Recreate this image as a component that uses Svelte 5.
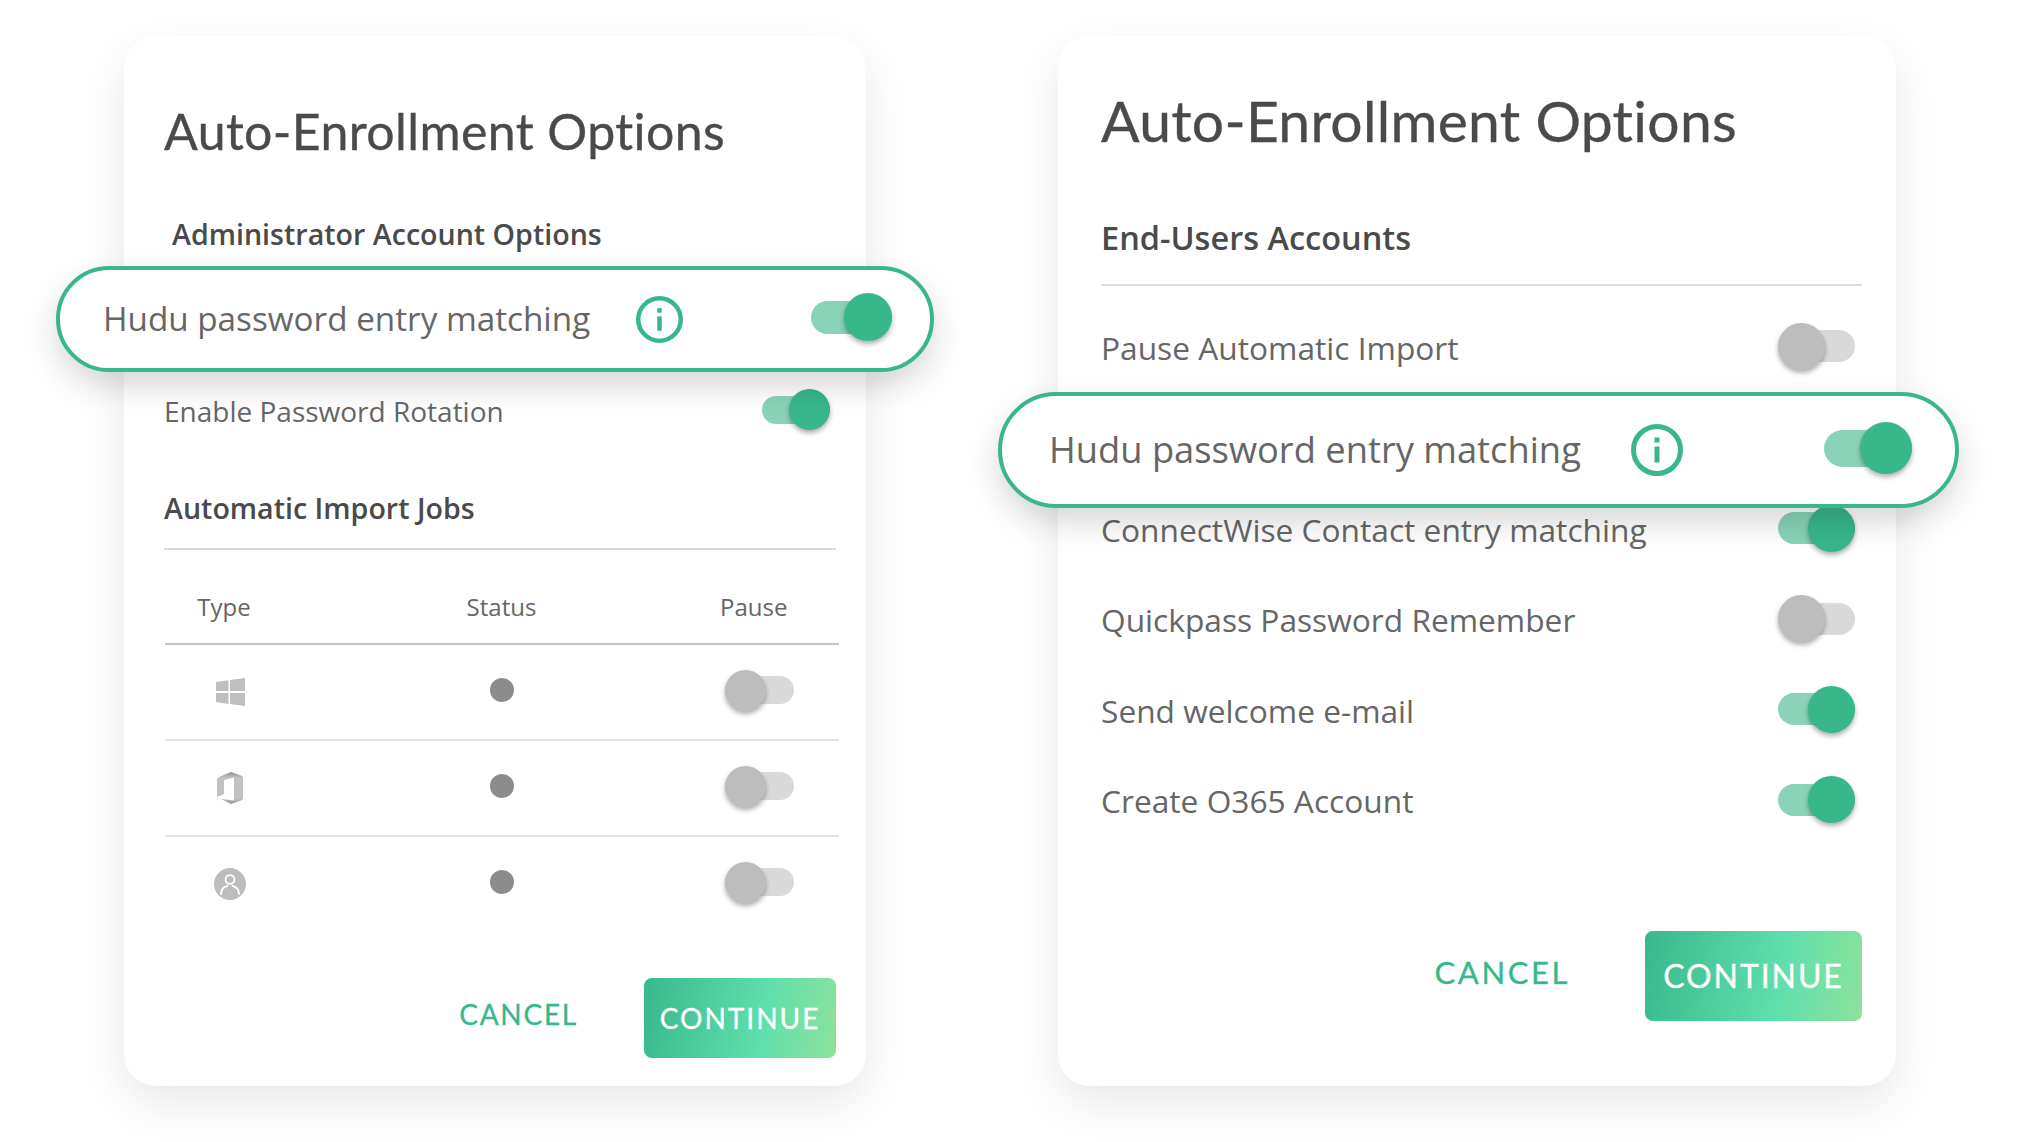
<script>
  const rightRows = [
    { label: 'ConnectWise Contact entry matching', on: true },
    { label: 'Quickpass Password Remember', on: false },
    { label: 'Send welcome e-mail', on: true },
    { label: 'Create O365 Account', on: true }
  ];
  const jobs = ['windows', 'office', 'user'];
</script>

{#snippet toggle(on, size)}
  <span class="toggle {size}" class:on>
    <span class="track"></span>
    <span class="knob"></span>
  </span>
{/snippet}

{#snippet info()}
  <svg class="info" viewBox="0 0 52 52" aria-hidden="true">
    <circle cx="26" cy="26" r="23.5" fill="none" stroke="#38b78b" stroke-width="5" />
    <rect x="23.5" y="13.5" width="5" height="5" fill="#38b78b" />
    <rect x="23.5" y="22.5" width="5" height="16" fill="#38b78b" />
  </svg>
{/snippet}

<main class="page">
  <section class="card left">
    <h1>Auto-Enrollment Options</h1>
    <h2 class="admin">Administrator Account Options</h2>

    <div class="pill">
      <span class="pill-text">Hudu password entry matching</span>
      {@render info()}
      {@render toggle(true, 'p1')}
    </div>

    <div class="row">
      <span>Enable Password Rotation</span>
      {@render toggle(true, 'sm')}
    </div>

    <h2 class="jobs">Automatic Import Jobs</h2>

    <div class="table">
      <div class="thead">
        <span class="type">Type</span>
        <span class="status">Status</span>
        <span class="pause">Pause</span>
      </div>
      {#each jobs as job}
        <div class="tr">
          <span class="icon">
            {#if job === 'windows'}
              <svg width="29" height="28" viewBox="0 0 29 28" aria-hidden="true">
                <path fill="#bfbfbf" d="M0 4 12.5 2.2V13H0ZM14 2 29 0V13H14ZM0 15H12.5V26L0 24ZM14 15H29V28L14 26Z" />
              </svg>
            {:else if job === 'office'}
              <svg width="26" height="32" viewBox="0 0 26 32" aria-hidden="true">
                <defs>
                  <linearGradient id="off" x1="0" y1="0" x2="0" y2="1">
                    <stop offset="0" stop-color="#8f8f8f" />
                    <stop offset=".18" stop-color="#c2c2c2" />
                    <stop offset=".82" stop-color="#c2c2c2" />
                    <stop offset="1" stop-color="#949494" />
                  </linearGradient>
                </defs>
                <path fill="url(#off)" d="M14 0 24 3.5Q26 4.2 26 6.5V25.5Q26 27.8 24 28.5L14 32 4 27 17 28.5V5.5L7 8V22L0 25V7.5Q0 6 2 5Z" />
              </svg>
            {:else}
              <svg width="32" height="32" viewBox="0 0 32 32" aria-hidden="true">
                <circle cx="16" cy="16" r="16" fill="#bdbdbd" />
                <circle cx="16" cy="11.5" r="4.4" fill="none" stroke="#fff" stroke-width="1.8" />
                <path fill="none" stroke="#fff" stroke-width="1.8" stroke-linecap="round" d="M7 26C7 20 11 18.5 13.5 17.8M25 26C25 20 21 18.5 18.5 17.8" />
              </svg>
            {/if}
          </span>
          <span class="dot"></span>
          <span class="cell-toggle">{@render toggle(false, 'sm')}</span>
        </div>
      {/each}
    </div>

    <footer>
      <span class="cancel">CANCEL</span>
      <span class="continue">CONTINUE</span>
    </footer>
  </section>

  <section class="card right">
    <h1>Auto-Enrollment Options</h1>
    <h2 class="end">End-Users Accounts</h2>

    <div class="row first">
      <span>Pause Automatic Import</span>
      {@render toggle(false, 'md')}
    </div>

    <div class="pill">
      <span class="pill-text">Hudu password entry matching</span>
      {@render info()}
      {@render toggle(true, 'p2')}
    </div>

    <div class="rows">
      {#each rightRows as r}
        <div class="row">
          <span>{r.label}</span>
          {@render toggle(r.on, 'md')}
        </div>
      {/each}
    </div>

    <footer>
      <span class="cancel">CANCEL</span>
      <span class="continue">CONTINUE</span>
    </footer>
  </section>
</main>

<style>
  :global(body) {
    margin: 0;
    background: #fff;
  }
  .page {
    display: flex;
    gap: 192px;
    width: 2018px;
    height: 1142px;
    box-sizing: border-box;
    padding: 36px 0 0 124px;
    overflow: hidden;
    font-family: "Open Sans", sans-serif;
    color: #666;
  }
  .card {
    height: 1050px;
    box-sizing: border-box;
    background: #fff;
    border-radius: 32px;
    box-shadow: 0 18px 44px rgba(0, 0, 0, 0.09);
  }
  .card.left {
    width: 742px;
    padding: 65px 30px 0 40px;
    font-size: 28px;
  }
  .card.right {
    width: 838px;
    padding: 54px 34px 0 43px;
    font-size: 31.7px;
  }
  h1 {
    margin: 0;
    height: 60px;
    display: flex;
    align-items: center;
    font-family: Lato, sans-serif;
    font-weight: 400;
    color: #4a4a4a;
    white-space: nowrap;
    -webkit-text-stroke: 0.35px #4a4a4a;
  }
  .left h1 {
    font-size: 50px;
    letter-spacing: 0.4px;
  }
  .right h1 {
    font-size: 57px;
    letter-spacing: 0.3px;
  }
  h2 {
    margin: 0;
    height: 40px;
    display: flex;
    align-items: center;
    font-weight: 600;
    color: #4a4a4a;
    white-space: nowrap;
    font-size: 28.6px;
  }
  h2.admin {
    margin-top: 52px;
    margin-left: 8px;
  }
  h2.jobs {
    margin-top: 36px;
    box-sizing: content-box;
    padding-bottom: 21px;
    border-bottom: 2px solid #d9d9d9;
  }
  h2.end {
    margin-top: 67px;
    padding-bottom: 27px;
    box-sizing: content-box;
    border-bottom: 2px solid #dcdcdc;
    font-size: 32.5px;
  }
  .row {
    height: 80px;
    display: flex;
    align-items: center;
    justify-content: space-between;
    white-space: nowrap;
  }
  .left .row {
    margin-top: -1px;
  }
  .row.first {
    margin-top: 21px;
  }
  .rows {
    display: flex;
    flex-direction: column;
    gap: 10.6px;
  }
  .row .toggle {
    margin-right: 6px;
    margin-bottom: 3px;
  }
  .right .row .toggle {
    margin-right: 7px;
    margin-bottom: 2px;
  }
  .pill {
    position: relative;
    z-index: 2;
    display: flex;
    align-items: center;
    box-sizing: border-box;
    background: #fff;
    border: 4px solid #38b78b;
    border-radius: 999px;
    white-space: nowrap;
    box-shadow: 0 14px 32px rgba(0, 0, 0, 0.16);
  }
  .pill-text {
    position: relative;
    top: -1px;
  }
  .left .pill {
    height: 106px;
    margin: 13px -98px 0 -108px;
    padding: 0 38px 0 43px;
    font-size: 33.25px;
  }
  .right .pill {
    height: 116px;
    margin: 5px -97px -19px -103px;
    padding: 0 43px 0 47px;
    font-size: 36.3px;
  }
  .pill .toggle {
    margin-left: auto;
    margin-bottom: 4px;
  }
  .info {
    display: block;
  }
  .left .info {
    width: 47px;
    height: 47px;
    margin-left: 46px;
  }
  .right .info {
    width: 52px;
    height: 52px;
    margin-left: 50px;
  }
  .toggle {
    position: relative;
    display: flex;
    flex: none;
    align-items: center;
    justify-content: flex-start;
    width: var(--w);
    height: var(--k);
  }
  .toggle.on {
    justify-content: flex-end;
  }
  .toggle.sm {
    --w: 68px;
    --k: 41px;
    --t: 28px;
  }
  .cell-toggle .toggle.sm {
    --w: 69px;
  }
  .toggle.md {
    --w: 77px;
    --k: 47px;
    --t: 32px;
  }
  .toggle.p1 {
    --w: 81px;
    --k: 48px;
    --t: 33px;
  }
  .toggle.p2 {
    --w: 88px;
    --k: 52px;
    --t: 37px;
  }
  .track {
    position: absolute;
    left: 0;
    right: 0;
    top: calc((var(--k) - var(--t)) / 2);
    height: var(--t);
    border-radius: 99px;
    background: #d9d9d9;
  }
  .on .track {
    background: #8ad3b8;
  }
  .knob {
    position: relative;
    width: var(--k);
    height: var(--k);
    border-radius: 50%;
    background: #bdbdbd;
    box-shadow: 0 3px 5px rgba(0, 0, 0, 0.32);
  }
  .on .knob {
    background: #38b78b;
  }
  .table {
    font-size: 24px;
    margin: 0 -3px 0 1px;
  }
  .thead,
  .tr {
    display: grid;
    grid-template-columns: 118px 437px 1fr;
    box-sizing: border-box;
    align-items: center;
    height: 96px;
    border-bottom: 2px solid #e2e2e2;
  }
  .thead {
    height: 95px;
    padding-top: 19px;
    border-bottom-color: #c4c4c4;
  }
  .tr {
    padding-bottom: 4px;
  }
  .tr:last-child {
    border-bottom: 0;
    padding-bottom: 6px;
  }
  .type,
  .status {
    justify-self: center;
  }
  .icon {
    justify-self: center;
    margin-left: 12px;
    display: flex;
    position: relative;
    top: 2px;
  }
  .dot {
    justify-self: center;
    width: 24px;
    height: 24px;
    border-radius: 50%;
    background: #8c8c8c;
  }
  .cell-toggle {
    margin-left: 5px;
  }
  footer {
    display: flex;
    justify-content: flex-end;
    align-items: center;
    white-space: nowrap;
  }
  .cancel {
    font-family: Lato, sans-serif;
    color: #38b78b;
    margin-bottom: 8px;
    -webkit-text-stroke: 0.3px #38b78b;
  }
  .continue {
    display: flex;
    align-items: center;
    justify-content: center;
    font-family: Lato, sans-serif;
    color: #fff;
    border-radius: 8px;
    background: linear-gradient(100deg, #38b98d 0%, #5fdfad 62%, #8ce29a 100%);
    -webkit-text-stroke: 0.3px #fff;
  }
  .left footer {
    margin-top: 45px;
  }
  .left .cancel {
    font-size: 28px;
    letter-spacing: 1.75px;
    margin-right: 66px;
  }
  .left .continue {
    width: 192px;
    height: 80px;
    font-size: 28px;
    letter-spacing: 2px;
  }
  .right footer {
    margin-top: 90px;
  }
  .right .cancel {
    font-size: 31px;
    letter-spacing: 2.6px;
    margin-right: 75px;
  }
  .right .continue {
    width: 217px;
    height: 90px;
    font-size: 32px;
    letter-spacing: 1.9px;
  }
</style>
